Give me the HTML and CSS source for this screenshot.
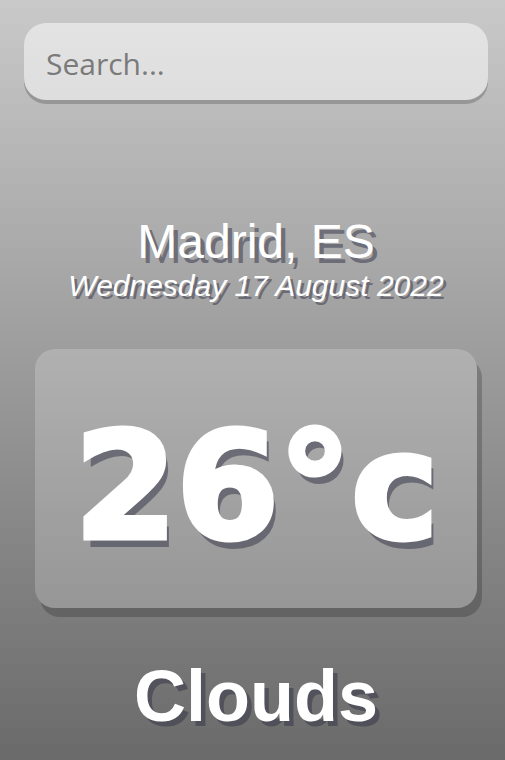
FILE: index.html
```html
<!DOCTYPE html>
<html lang="en">
<head>
<meta charset="utf-8">
<title>Weather</title>
<link rel="stylesheet" href="styles.css">
</head>
<body>
<main class="app">
  <div class="search-box">
    <input class="search-bar" type="text" placeholder="Search...">
  </div>
  <div class="location-box">
    <div class="location">Madrid, ES</div>
    <div class="date">Wednesday 17 August 2022</div>
  </div>
  <div class="weather-box">
    <div class="temp">26°c</div>
    <div class="weather">Clouds</div>
  </div>
</main>
</body>
</html>
```
FILE: styles.css
```css
* { box-sizing: border-box; }
html, body { margin: 0; padding: 0; }
body { font-family: "Liberation Sans", Arial, sans-serif; }

.app {
  min-height: 760px;
  padding: 23px 17px 0 24px;
  background: linear-gradient(to bottom, #c9c9c9 0%, #6a6a6a 100%);
}

.search-bar {
  display: block;
  width: 100%;
  height: 77px;
  padding: 4px 22px 0;
  border: none;
  outline: none;
  background-color: rgba(255, 255, 255, 0.5);
  border-radius: 22px;
  box-shadow: 0 4px rgba(0, 0, 0, 0.2);
  font-family: "Open Sans", sans-serif;
  font-size: 30px;
  color: #313131;
}
.search-bar::placeholder { color: #7a7a7a; }

.location-box { margin-top: 118px; text-align: center; color: #fff; }
.location {
  font-size: 48px;
  line-height: 48px;
  text-shadow: 4.5px 4.5px rgba(50, 50, 70, 0.5);
}
.date {
  margin-top: 5px;
  font-size: 30px;
  line-height: 30px;
  font-style: italic;
  text-shadow: 3px 3px rgba(50, 50, 70, 0.5);
}

.weather-box { text-align: center; color: #fff; }
.temp {
  display: flex;
  align-items: center;
  justify-content: center;
  width: 442px;
  height: 259px;
  margin: 48px auto 0;
  padding-top: 16px;
  background-color: rgba(255, 255, 255, 0.2);
  border-radius: 20px;
  box-shadow: 5px 9px rgba(0, 0, 0, 0.2);
  font-family: "DejaVu Sans", sans-serif;
  font-weight: 700;
  font-size: 148px;
  letter-spacing: -1px;
  line-height: 1;
  -webkit-text-stroke: 5px #fff;
  text-shadow: 4.5px 9px rgba(50, 50, 70, 0.5);
}
.weather {
  margin-top: 52px;
  font-size: 72px;
  line-height: 72px;
  font-weight: 700;
  text-shadow: 4.5px 4.5px rgba(50, 50, 70, 0.5);
}
```
